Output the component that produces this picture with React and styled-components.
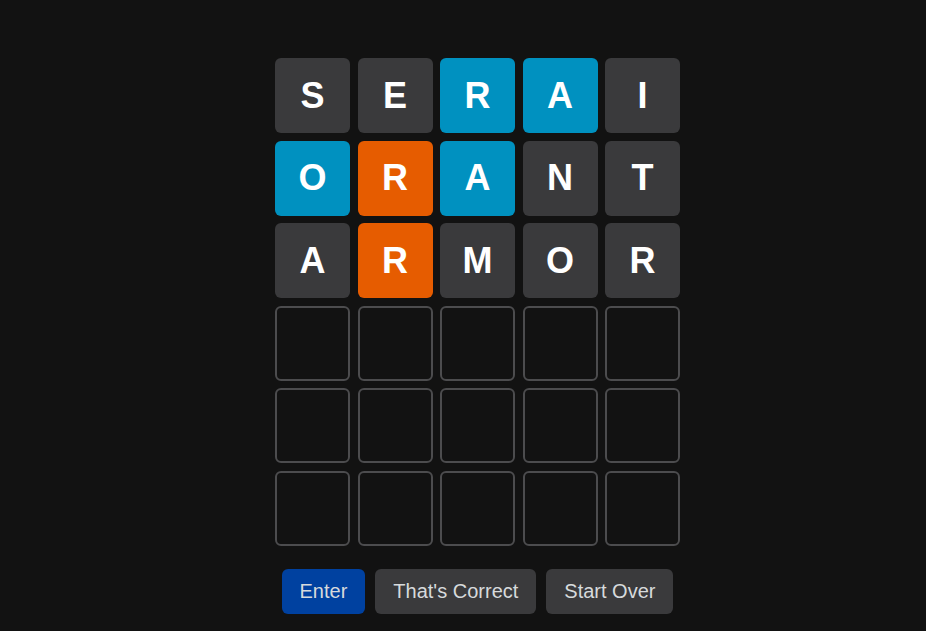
import styled, { createGlobalStyle } from "styled-components";

const GlobalStyle = createGlobalStyle`
    html, body {
        margin: 0;
        padding: 0;
        background: #121212;
    }
    body {
        font-family: "Liberation Sans", Arial, sans-serif;
        color: #ffffff;
    }
`;

const colors = {
    absent: "#3a3a3c",
    present: "#0091c0",
    correct: "#e65c00",
};

const Page = styled.div`
    min-height: 631px;
    display: flex;
    flex-direction: column;
    align-items: center;
    padding: 58px 0 0 29px;
    box-sizing: border-box;
`;

const Board = styled.div`
    display: grid;
    grid-template-columns: repeat(5, 75px);
    grid-auto-rows: 75px;
    gap: 7.5px;
`;

const Tile = styled.div`
    display: flex;
    align-items: center;
    justify-content: center;
    box-sizing: border-box;
    border-radius: 6px;
    font-size: 36px;
    font-weight: bold;
    color: #ffffff;
    background: ${(props) => (props.$state ? colors[props.$state] : "transparent")};
    border: ${(props) => (props.$state ? "none" : "2px solid #4c4c4e")};
`;

const Controls = styled.div`
    display: flex;
    gap: 10px;
    margin-top: 23px;
`;

const Button = styled.button`
    height: 45px;
    padding: 0 18px;
    border: none;
    border-radius: 6px;
    font-family: "Liberation Sans", Arial, sans-serif;
    font-size: 20px;
    color: #d7dadc;
    background: ${(props) => (props.$primary ? "#0041a0" : "#3a3a3c")};
    cursor: pointer;
`;

const guesses = [
    { word: "SERAI", states: ["absent", "absent", "present", "present", "absent"] },
    { word: "ORANT", states: ["present", "correct", "present", "absent", "absent"] },
    { word: "ARMOR", states: ["absent", "correct", "absent", "absent", "absent"] },
];

const rows = Array.from({ length: 6 }, (_, r) => guesses[r] || null);

export default function App() {
    return (
        <>
            <GlobalStyle />
            <Page>
                <Board>
                    {rows.map((row, r) =>
                        Array.from({ length: 5 }, (_, c) => (
                            <Tile key={`${r}-${c}`} $state={row ? row.states[c] : null}>
                                {row ? row.word[c] : ""}
                            </Tile>
                        ))
                    )}
                </Board>
                <Controls>
                    <Button $primary>Enter</Button>
                    <Button>That's Correct</Button>
                    <Button>Start Over</Button>
                </Controls>
            </Page>
        </>
    );
}
